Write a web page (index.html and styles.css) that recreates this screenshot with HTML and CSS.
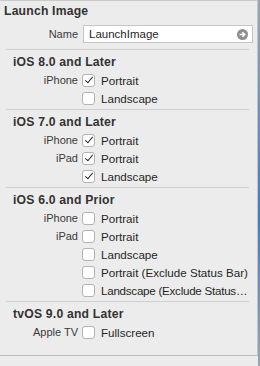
FILE: index.html
```html
<!DOCTYPE html>
<html lang="en">
<head>
  <meta charset="UTF-8" />
  <title>Launch Image</title>
  <link rel="stylesheet" href="styles.css">
</head>
<body>
<div class="window">
  <div class="panel">
    <div class="title">Launch Image</div>
    <div class="name-row">
      <span class="label">Name</span>
      <div class="name-field">
        <span>LaunchImage</span>
        <svg class="go" width="11" height="11" viewBox="0 0 11 11">
          <circle cx="5.5" cy="5.5" r="5.5" fill="#8e8e8e"/>
          <path d="M2.6 5.5h5M5.4 3.2l2.3 2.3-2.3 2.3" stroke="#fff" stroke-width="1.6" fill="none"/>
        </svg>
      </div>
    </div>

    <div class="section">
      <div class="heading">iOS 8.0 and Later</div>
      <div class="row"><span class="label">iPhone</span><span class="box checked"></span><span>Portrait</span></div>
      <div class="row"><span class="label"></span><span class="box"></span><span>Landscape</span></div>
    </div>

    <div class="section">
      <div class="heading">iOS 7.0 and Later</div>
      <div class="row"><span class="label">iPhone</span><span class="box checked"></span><span>Portrait</span></div>
      <div class="row"><span class="label">iPad</span><span class="box checked"></span><span>Portrait</span></div>
      <div class="row"><span class="label"></span><span class="box checked"></span><span>Landscape</span></div>
    </div>

    <div class="section">
      <div class="heading">iOS 6.0 and Prior</div>
      <div class="row"><span class="label">iPhone</span><span class="box"></span><span>Portrait</span></div>
      <div class="row"><span class="label">iPad</span><span class="box"></span><span>Portrait</span></div>
      <div class="row"><span class="label"></span><span class="box"></span><span>Landscape</span></div>
      <div class="row"><span class="label"></span><span class="box"></span><span>Portrait (Exclude Status Bar)</span></div>
      <div class="row"><span class="label"></span><span class="box"></span><span class="tight">Landscape (Exclude Status…</span></div>
    </div>

    <div class="section last">
      <div class="heading">tvOS 9.0 and Later</div>
      <div class="row"><span class="label">Apple TV</span><span class="box"></span><span>Fullscreen</span></div>
    </div>
  </div>
  <div class="edge"></div>
</div>
</body>
</html>
```

FILE: styles.css
```css
body {
  margin: 0;
  background: #ececec;
  font-family: "Liberation Sans", Arial, sans-serif;
  font-size: 11.6px;
  color: #262626;
}

.window {
  display: flex;
  height: 366px;
}

.panel {
  width: 257px;
  height: 354px;
  border-top: 1px solid #c9c9c9;
  border-right: 1px solid #c4c4c4;
  border-bottom: 1px solid #bdbdbd;
  background: #ececec;
}

.edge {
  width: 2px;
  background: linear-gradient(#9aa6b4, #3f7fc0 60%, #9aa6b4);
}

.title {
  font-weight: bold;
  font-size: 12.2px;
  letter-spacing: 0.2px;
  line-height: 18px;
  padding: 1px 0 0 4px;
  color: #333;
}

.name-row {
  display: flex;
  align-items: center;
  margin-top: 5px;
}

.label {
  width: 78px;
  flex: none;
  text-align: right;
  color: #3a3a3a;
  font-size: 11px;
}

.name-field {
  margin-left: 5px;
  height: 16px;
  border: 1px solid #c6c6c6;
  background: #fff;
  display: flex;
  align-items: center;
  justify-content: space-between;
  padding: 0 4px 0 5px;
  font-size: 11.5px;
  width: 159px;
}

.go {
  display: block;
}

.section {
  margin: 6px 0 0 6px;
  width: 243px;
  border-top: 1px solid #cfcfcf;
  padding: 3px 0 2px;
}

.section + .section {
  margin-top: 0;
}

.section.last {
  padding-bottom: 0;
}

.heading {
  font-weight: bold;
  font-size: 12.2px;
  letter-spacing: 0.2px;
  line-height: 18px;
  padding-left: 7px;
  color: #333;
}

.row {
  display: flex;
  align-items: center;
  height: 18px;
  margin-left: -6px;
  white-space: nowrap;
}

.tight {
  letter-spacing: -0.25px;
}

.box {
  flex: none;
  width: 11px;
  height: 11px;
  margin: 0 6px 0 4px;
  border: 1px solid #b3b3b3;
  border-radius: 3px;
  background: #fff;
  position: relative;
}

.box.checked::after {
  content: "";
  position: absolute;
  left: 3.5px;
  top: 0.5px;
  width: 3px;
  height: 7px;
  border-right: 1.6px solid #2b2b2b;
  border-bottom: 1.6px solid #2b2b2b;
  transform: rotate(40deg);
}
```
